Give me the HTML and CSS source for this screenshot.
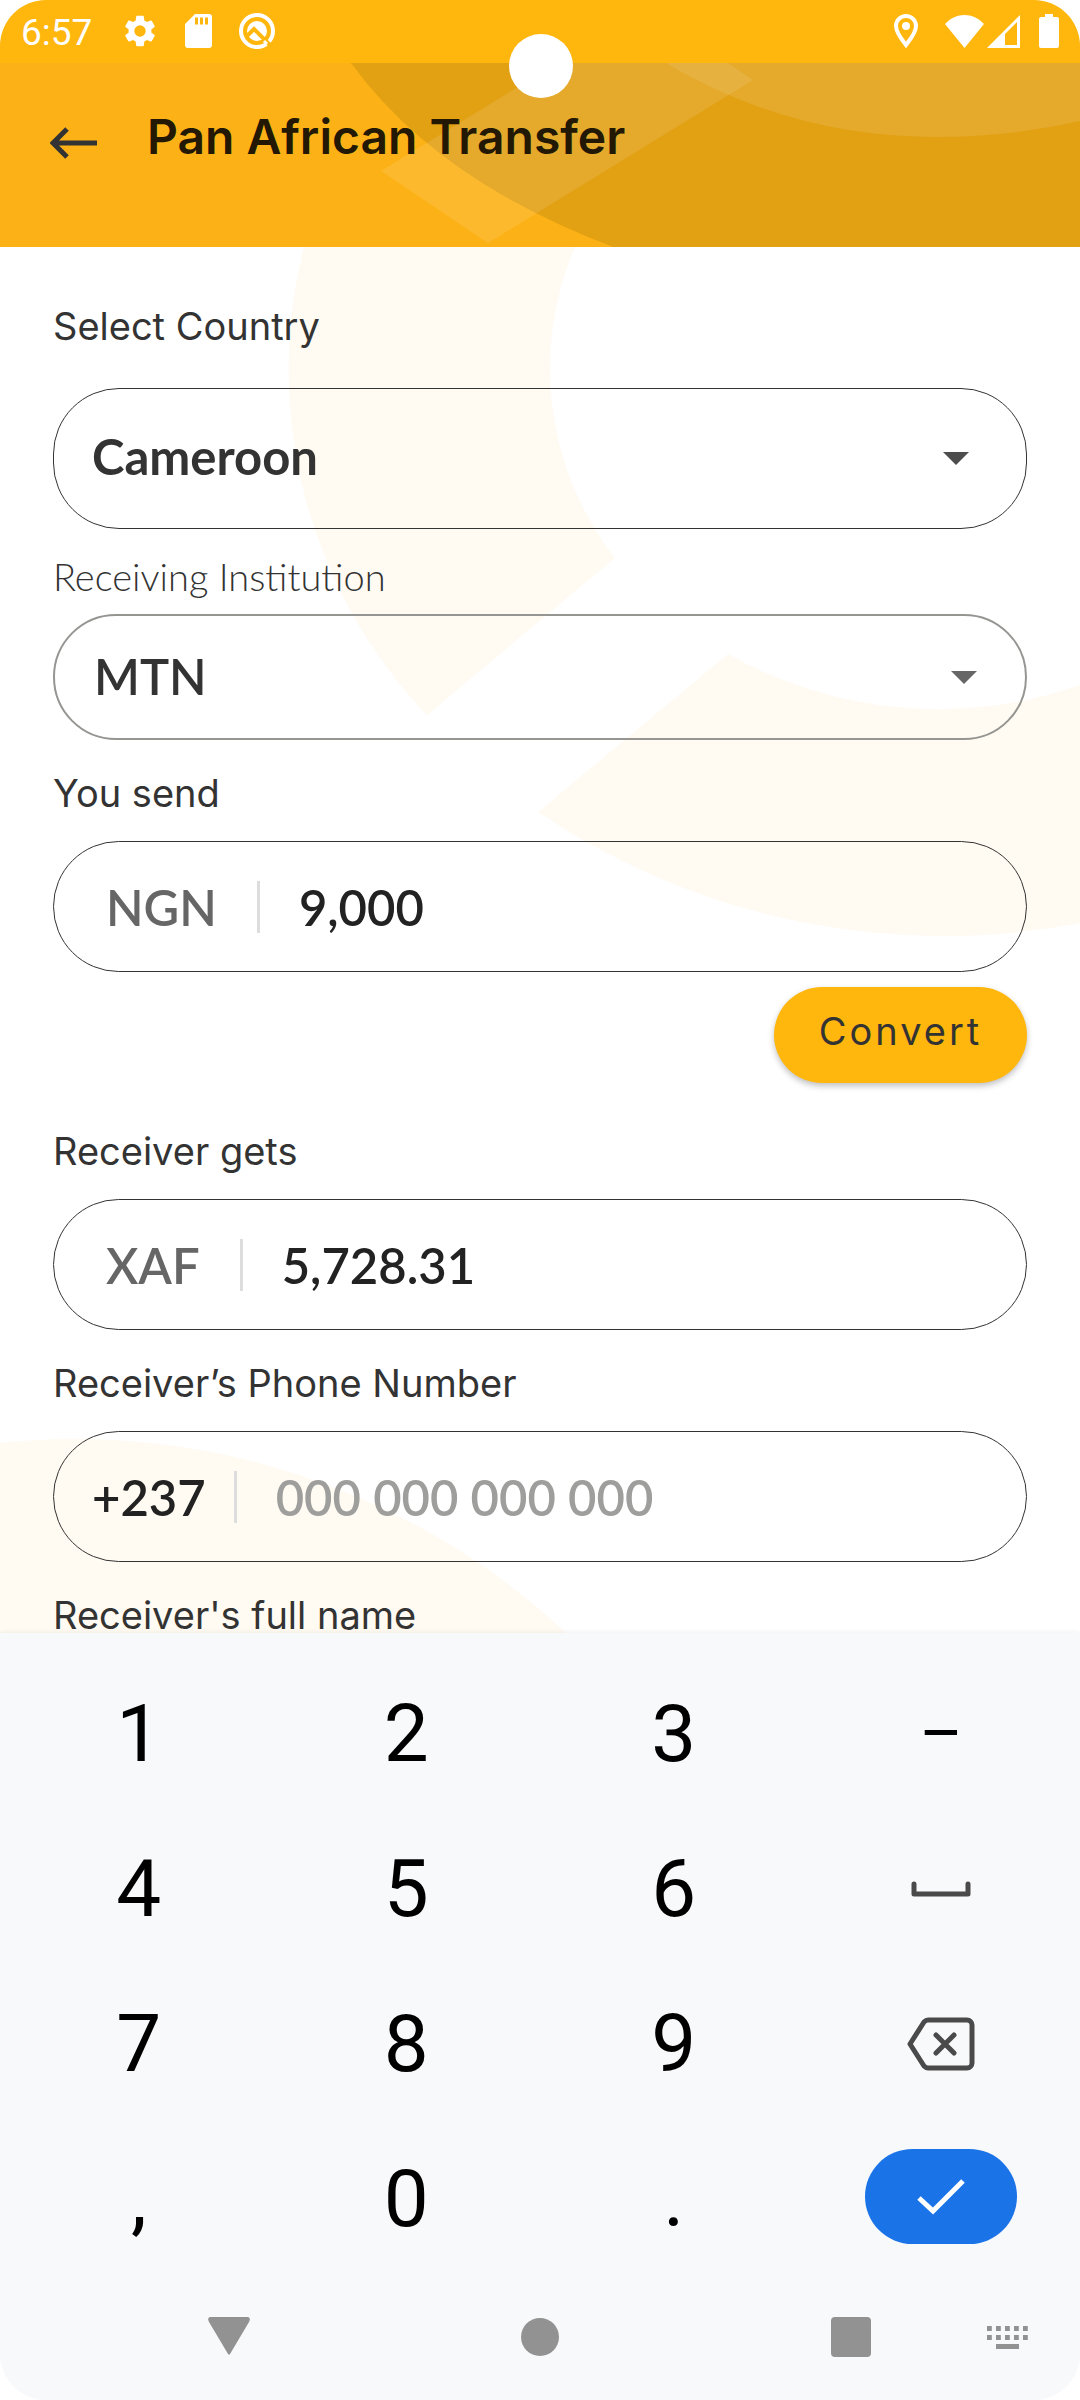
FILE: index.html
```html
<!DOCTYPE html>
<html lang="en">
<head>
<meta charset="utf-8">
<meta name="viewport" content="width=device-width, initial-scale=1">
<title>Pan African Transfer</title>
<link rel="stylesheet" href="styles.css">
</head>
<body>
<div class="screen">
  <div class="status-bar">
    <div class="status-group status-left">
      <span class="clock">6:57</span>
      <svg class="gear" width="38" height="40" viewBox="0 0 24 24" fill="currentColor"><path d="M19.14 12.94c.04-.3.06-.61.06-.94 0-.32-.02-.64-.07-.94l2.03-1.58a.49.49 0 0 0 .12-.61l-1.92-3.32a.49.49 0 0 0-.59-.22l-2.39.96a7 7 0 0 0-1.62-.94l-.36-2.54a.48.48 0 0 0-.48-.41h-3.84a.47.47 0 0 0-.47.41l-.36 2.54c-.59.24-1.13.57-1.62.94l-2.39-.96a.48.48 0 0 0-.59.22L2.74 8.87a.48.48 0 0 0 .12.61l2.03 1.58c-.05.3-.09.63-.09.94s.02.64.07.94l-2.03 1.58a.49.49 0 0 0-.12.61l1.92 3.32c.12.22.37.29.59.22l2.39-.96c.5.38 1.03.7 1.62.94l.36 2.54c.05.24.24.41.48.41h3.84c.24 0 .44-.17.47-.41l.36-2.54a6.800 6.800 0 0 0 1.62-.94l2.39.96c.22.08.47 0 .59-.22l1.92-3.32a.47.47 0 0 0-.12-.61zM12 15.600a3.600 3.600 0 1 1 0-7.200 3.600 3.600 0 0 1 0 7.200z"/></svg>
      <svg width="27" height="34" viewBox="0 0 27 34"><path fill="currentColor" fill-rule="evenodd" d="M10 0H24a3 3 0 0 1 3 3V31a3 3 0 0 1-3 3H3a3 3 0 0 1-3-3V10zM10 3.500v7h3v-7zM15 3.500v7h3v-7zM20 3.500v7h3v-7z"/></svg>
      <svg width="38" height="38" viewBox="0 0 38 38"><circle cx="19" cy="19" r="16" fill="none" stroke="currentColor" stroke-width="4"/><circle cx="19" cy="19" r="10" fill="currentColor"/><path d="M9 24L16 17 33 34" fill="none" stroke="#ffb60d" stroke-width="4"/><path d="M26 29L29 32" stroke="currentColor" stroke-width="3"/></svg>
    </div>
    <div class="status-group status-right">
      <svg class="pin" width="24" height="34" viewBox="0 0 24 34"><path d="M12 2a10 10 0 0 0-10 10c0 7 7 15 10 19 3-4 10-12 10-19A10 10 0 0 0 12 2z" fill="none" stroke="currentColor" stroke-width="4"/><circle cx="12" cy="12" r="4" fill="currentColor"/></svg>
      <svg width="39" height="33" viewBox="0 0 39 33"><path d="M0 9C11-3 28-3 39 9L19.500 33z" fill="currentColor"/></svg>
      <svg class="signal" width="33" height="33" viewBox="0 0 33 33"><path fill="currentColor" fill-rule="evenodd" d="M33 0V33H0zM30 7L18 19V30H30z"/></svg>
      <svg width="20" height="34" viewBox="0 0 20 34"><path d="M6 0h8v3h4a2 2 0 0 1 2 2v27a2 2 0 0 1-2 2H2a2 2 0 0 1-2-2V5a2 2 0 0 1 2-2h4z" fill="currentColor"/></svg>
    </div>
    <span class="camera"></span>
  </div>

  <header class="app-bar">
    <svg class="app-bar-art" viewBox="0 0 1080 184" preserveAspectRatio="xMaxYMin slice"><path fill="#e2a013" d="M351 0Q436 117 613 184H1080V0z"/><path fill="#fff" fill-opacity=".1" d="M557 0L381 108 488 180 753 17 728 0z"/><path fill="#fff" fill-opacity=".1" d="M666 0Q790 74 936 74 1010 74 1080 58V0z"/></svg>
    <button class="back" type="button" aria-label="Back"><svg width="48" height="32" viewBox="0 0 48 32"><path d="M47 16H4M17 2L3 16 17 30" fill="none" stroke="#333" stroke-width="5"/></svg></button>
    <h1>Pan African Transfer</h1>
  </header>

  <main class="content">
    <svg class="content-art" viewBox="0 0 1080 1386" preserveAspectRatio="xMidYMin slice" fill="#fffaf2"><path d="M304 0A500 500 0 0 0 427 468L615 311A308 308 0 0 1 575 0z"/><path d="M538 565L728 407A428 428 0 0 0 1080 438V676A725 725 0 0 1 538 565z"/><path d="M0 1196A718 718 0 0 1 566 1386H0z"/></svg>
    <form class="form">
      <label class="label label-first" for="country">Select Country</label>
      <div class="field field-country">
        <select id="country"><option>Cameroon</option></select>
        <svg class="caret" width="26" height="13" viewBox="0 0 26 13"><path d="M0 0H26L13 13z" fill="#4d4d4d"/></svg>
      </div>

      <label class="label label-light" for="institution">Receiving Institution</label>
      <div class="field field-institution">
        <select id="institution"><option>MTN</option></select>
        <svg class="caret" width="26" height="13" viewBox="0 0 26 13"><path d="M0 0H26L13 13z" fill="#666"/></svg>
      </div>

      <label class="label" for="send">You send</label>
      <div class="field field-amount">
        <span class="prefix">NGN</span>
        <input id="send" type="text" inputmode="decimal" value="9,000">
      </div>

      <button class="convert" type="button">Convert</button>

      <label class="label label-gets" for="gets">Receiver gets</label>
      <div class="field field-amount">
        <span class="prefix">XAF</span>
        <input id="gets" type="text" value="5,728.31" readonly>
      </div>

      <label class="label" for="phone">Receiver’s Phone Number</label>
      <div class="field field-phone">
        <span class="prefix">+237</span>
        <input id="phone" type="tel" placeholder="000 000 000 000">
      </div>

      <div class="label label-last">Receiver's full name</div>
    </form>
  </main>

  <section class="keyboard" aria-label="Keyboard">
    <div class="keys">
      <button type="button">1</button><button type="button">2</button><button type="button">3</button><button type="button" class="dash">–</button>
      <button type="button">4</button><button type="button">5</button><button type="button">6</button>
      <button type="button" aria-label="Space"><svg width="60" height="16" viewBox="0 0 60 16"><path d="M3 3V13H57V3" fill="none" stroke="#4a4a4a" stroke-width="5" stroke-linecap="round" stroke-linejoin="round"/></svg></button>
      <button type="button">7</button><button type="button">8</button><button type="button">9</button>
      <button type="button" aria-label="Delete"><svg width="68" height="54" viewBox="0 0 68 54" fill="none" stroke="#4a4a4a" stroke-width="5" stroke-linejoin="round"><path d="M21 3H60a5 5 0 0 1 5 5V46a5 5 0 0 1-5 5H21Q19 51 17 49L3 27 17 5Q19 3 21 3z"/><path d="M29 18L47 36M47 18L29 36" stroke-linecap="round"/></svg></button>
      <button type="button">,</button><button type="button">0</button><button type="button">.</button>
      <button type="button" class="done" aria-label="Done"><span><svg width="48" height="36" viewBox="0 0 48 36"><path d="M2 19L16 32 46 2" fill="none" stroke="#fff" stroke-width="5"/></svg></span></button>
    </div>
    <nav class="nav-bar">
      <button type="button" aria-label="Hide keyboard"><svg width="42" height="40" viewBox="0 0 42 40"><path d="M2 0H40Q43 1 41 5L22 37Q21 38 20 37L1 5Q-1 1 2 0z" fill="#929292"/></svg></button>
      <button type="button" aria-label="Home"><svg width="40" height="40" viewBox="0 0 40 40"><circle cx="20" cy="20" r="19" fill="#929292"/></svg></button>
      <button type="button" aria-label="Recents"><svg width="40" height="40" viewBox="0 0 40 40"><rect width="40" height="40" rx="4" fill="#929292"/></svg></button>
      <button type="button" class="switch" aria-label="Switch keyboard"><svg width="42" height="24" viewBox="0 0 42 24"><path d="M0 2.500H42M0 11.500H42" stroke="#929292" stroke-width="5" stroke-dasharray="4.800 4.200"/><path d="M9 20.500H32" stroke="#929292" stroke-width="5"/></svg></button>
    </nav>
  </section>
</div>
</body>
</html>
```
FILE: styles.css
```css
* { box-sizing: border-box; }

body {
  margin: 0;
  background: #fff;
  font-family: Inter, "Open Sans", sans-serif;
  color: #333;
}

svg { display: block; flex: none; }

button {
  border: 0;
  padding: 0;
  background: none;
  color: inherit;
  font: inherit;
}

.screen {
  display: flex;
  flex-direction: column;
  min-height: 100vh;
  border-radius: 46px;
  overflow: hidden;
}

/* Status bar */
.status-bar {
  position: relative;
  display: flex;
  justify-content: space-between;
  height: 63px;
  padding: 0 21px;
  background: #ffb60d;
  color: #fff;
}

.status-group {
  display: flex;
  align-items: center;
  height: 62px;
}

.status-left { gap: 26px; }
.clock { font: 37px/42px Roboto, sans-serif; padding-top: 4px; margin-right: 3px; }
.pin { margin-right: 27px; }
.signal { margin: 0 19px 0 3px; }

.camera {
  position: absolute;
  z-index: 2;
  top: 34px;
  left: 50%;
  width: 64px;
  height: 64px;
  margin-left: -31px;
  border-radius: 50%;
  background: #fff;
}

/* App bar */
.app-bar {
  position: relative;
  display: flex;
  align-items: flex-start;
  gap: 49px;
  height: 184px;
  padding: 44px 50px;
  background: #fcb216;
}

.app-bar-art,
.content-art {
  position: absolute;
  inset: 0;
  width: 100%;
  height: 100%;
}

.back { position: relative; padding-top: 20px; }

h1 {
  position: relative;
  margin: 0;
  font-size: 48px;
  font-weight: 600;
  line-height: 60px;
  color: #221803;
}

/* Form */
.content {
  position: relative;
  overflow: hidden;
}

.form {
  position: relative;
  display: flex;
  flex-direction: column;
  padding: 0 53px;
}

.label {
  padding: 30px 0 25px;
  font-size: 38px;
  line-height: 46px;
}

.label-first { padding: 56px 0 39px; }
.label-light {
  padding: 24px 0 15px;
  font-family: Lato, sans-serif;
  font-weight: 300;
}
.label-gets { padding-top: 45px; }
.label-last { padding-bottom: 0; margin-bottom: -5px; }

.field {
  position: relative;
  display: flex;
  align-items: center;
  border: 1px solid #333;
  border-radius: 66px;
  font: 600 49px/60px Lato, sans-serif;
}

.field-country { height: 141px; }
.field-institution { height: 126px; border: 2px solid #959592; }
.field-amount, .field-phone { height: 131px; }

.field select {
  width: 100%;
  height: 100%;
  padding: 0 38px;
  border: 0;
  appearance: none;
  background: none;
  color: #333;
  font: inherit;
}
.field-country select { padding-bottom: 6px; font-weight: 700; }
.field-institution select { padding: 0 39px 2px; }

.caret {
  position: absolute;
  right: 57px;
  pointer-events: none;
}
.field-institution .caret { right: 48px; }

.prefix {
  padding: 0 40px 0 52px;
  color: #666;
}
.field-phone .prefix {
  padding: 0 28px 0 38px;
  color: #222;
}

.field input {
  flex: 1;
  min-width: 0;
  height: 52px;
  padding: 0 39px;
  border: 0;
  border-left: 3px solid #ddd;
  background: none;
  color: #222;
  font: inherit;
}
.field input::placeholder { color: #9e9e9c; opacity: 1; }

.convert {
  align-self: flex-end;
  width: 253px;
  height: 96px;
  margin-top: 15px;
  padding-bottom: 8px;
  border-radius: 48px;
  background: #ffb60d;
  box-shadow: 0 3px 6px rgba(0, 0, 0, .25);
  font-size: 38px;
  letter-spacing: 3px;
}

/* Keyboard */
.keyboard {
  position: relative;
  flex: 1;
  padding-top: 23px;
  background: #f8f9fb;
  box-shadow: 0 0 6px rgba(0, 0, 0, .08);
}

.keys {
  display: grid;
  grid-template-columns: repeat(4, 1fr);
  grid-auto-rows: 155px;
  padding: 0 5px;
}

.keys button {
  display: flex;
  align-items: center;
  justify-content: center;
  color: #000;
  font: 80px/94px Roboto, sans-serif;
}

.keys .dash { font-size: 66px; }

.keys .done { padding-bottom: 4px; }

.done span {
  display: flex;
  align-items: center;
  justify-content: center;
  width: 152px;
  height: 95px;
  border-radius: 48px;
  background: #1b73e8;
}

.nav-bar {
  position: relative;
  display: grid;
  grid-template-columns: repeat(3, 1fr);
  height: 121px;
  padding: 0 73px;
}

.nav-bar button {
  display: flex;
  align-items: center;
  justify-content: center;
}

.nav-bar .switch {
  position: absolute;
  top: 50px;
  right: 51px;
}
```
